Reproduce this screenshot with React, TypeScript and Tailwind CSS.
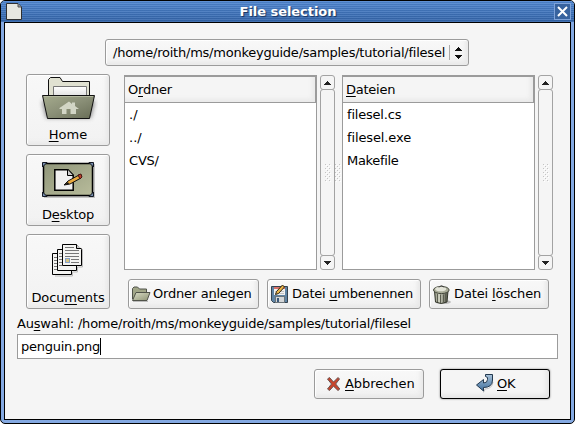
import type { ReactNode } from "react";

function Mnemonic({ text, at, className = "" }: { text: string; at: number; className?: string }) {
  return (
    <span className={`whitespace-pre ${className}`}>
      {text.slice(0, at)}
      <span className="underline decoration-1 underline-offset-2">{text[at]}</span>
      {text.slice(at + 1)}
    </span>
  );
}

function HomeIcon() {
  return (
    <svg className="shrink-0" width="60" height="48" viewBox="0 0 60 48">
      <defs>
        <linearGradient id="homeFront" x1="0" y1="0" x2="1" y2="1">
          <stop offset="0" stopColor="#a6ac8e" />
          <stop offset=".5" stopColor="#8a8f77" />
          <stop offset="1" stopColor="#676c55" />
        </linearGradient>
        <linearGradient id="paper" x1="0" y1="0" x2="0" y2="1">
          <stop offset="0" stopColor="#fff" />
          <stop offset="1" stopColor="#dedede" />
        </linearGradient>
        <filter id="soft" x="-20%" y="-20%" width="140%" height="150%">
          <feGaussianBlur stdDeviation="2" />
        </filter>
      </defs>
      <path d="M4 26H57L53 43H8Z" fill="#666" opacity=".75" filter="url(#soft)" />
      <path d="M10.500 22V4.500L12.500 2.500H22L24.500 6.500H51.500V22Z" fill="#e0e1d1" stroke="#111" />
      <path d="M15.500 22V11.500H48.500V22Z" fill="url(#paper)" stroke="#777" />
      <path d="M4.500 20.500H56.500L51.500 43.500H9.500Z" fill="url(#homeFront)" stroke="#111" />
      <path d="M6 21.500H55" stroke="#b4b99f" />
      <path d="M21.500 33L31 26.500L34 29V27.500H37V31L41 34H38V39H32.500V34H28.500V39H24V34H21.500Z" fill="#d2d5c5" />
    </svg>
  );
}

function DesktopIcon() {
  return (
    <svg className="shrink-0" width="60" height="48" viewBox="0 0 60 48">
      <defs>
        <linearGradient id="mat" x1="0" y1="0" x2="1" y2="1">
          <stop offset="0" stopColor="#90967a" />
          <stop offset="1" stopColor="#b8bc9b" />
        </linearGradient>
      </defs>
      <rect x="6" y="9" width="51" height="34" fill="#c4c4c4" />
      <rect x="5.500" y="8.500" width="49" height="32" fill="url(#mat)" stroke="#000" strokeWidth="1.500" />
      <path d="M4.500 7.500H9L4.500 12ZM55.500 7.500V12L51 7.500ZM4.500 41.500V37L9 41.500ZM55.500 41.500H51L55.500 37Z" fill="#758bad" stroke="#151a24" />
      <path d="M16.800 14.800H30L35.200 20V35.200H16.800Z" fill="#f0f0f0" stroke="#000" strokeWidth="1.500" />
      <path d="M29.500 14.500V20.500H35" fill="#ccc" stroke="#000" />
      <path d="M26 30L30 26L41 20L43 23L32 29Z" fill="#e9a93e" stroke="#111" />
      <path d="M40 20L43 19L44 22L42 24Z" fill="#b83e2d" stroke="#441711" />
      <path d="M26 30L30 27L31 29Z" fill="#111" />
    </svg>
  );
}

function DocumentsIcon() {
  return (
    <svg className="shrink-0" width="60" height="48" viewBox="0 0 60 48">
      <path d="M17 37H34.500V33H39.500V28H44.500V10" stroke="#bbb" fill="none" />
      <g fill="#f4f4f2" stroke="#000">
        <path d="M14.500 14.500H33.500V35.500H14.500Z" />
        <path d="M19.500 10.500H38.500V31.500H19.500Z" />
        <path d="M24.500 5.500H38.500L43.500 10.500V26.500H24.500Z" />
        <path d="M38.500 5.500V9.500H43.500" fill="#ccc" />
      </g>
      <path d="M16 18.500H19M16 21.500H19M16 24.500H19M16 27.500H19M16 30.500H19M21 14.500H24M21 17.500H24M21 20.500H24M21 23.500H24M21 26.500H24M27 8.500H36M27 11.500H41M27 14.500H41M27 17.500H41M33 20.500H41M33 23.500H41" stroke="#777" />
      <rect x="27.500" y="19.500" width="4" height="4" fill="#d8c47e" stroke="#86a0c6" />
    </svg>
  );
}

function FolderIcon() {
  return (
    <svg className="shrink-0" width="20" height="18" viewBox="0 0 20 18">
      <defs>
        <linearGradient id="flap" x1="0" y1="0" x2="1" y2="1">
          <stop offset="0" stopColor="#dcdfc8" />
          <stop offset="1" stopColor="#8d9274" />
        </linearGradient>
      </defs>
      <path d="M2 16.500H17" stroke="#bbb" />
      <path d="M1.500 14V3.500L3 2H6.500L8.500 4H15.500V7" fill="#a1a688" stroke="#50534a" />
      <path d="M1.500 15.500L5 7.500H19L16 15.500Z" fill="url(#flap)" stroke="#50534a" />
    </svg>
  );
}

function RenameIcon() {
  return (
    <svg className="shrink-0" width="20" height="20" viewBox="0 0 20 20">
      <path d="M1.500 2.500H17.500V18.500H3.500L1.500 16.500Z" fill="#5f83a3" stroke="#34424f" />
      <rect x="4" y="3" width="11" height="8" fill="#f1f1f1" />
      <path d="M4 4H15" stroke="#d87068" strokeWidth="2" />
      <path d="M5 7.500H14M5 9.500H14" stroke="#c4c4c4" />
      <rect x="5.500" y="12.500" width="9" height="6" fill="#d4d7d9" stroke="#6b747a" />
      <rect x="7" y="14" width="2" height="4" fill="#3a5878" />
      <path d="M5.500 10.500L6.500 7.500L12.500 1L14.500 3L8.500 9.500Z" fill="#e9b54a" stroke="#2c2413" />
    </svg>
  );
}

function TrashIcon() {
  return (
    <svg className="shrink-0" width="20" height="21" viewBox="0 0 20 21">
      <defs>
        <linearGradient id="can" x1="0" y1="0" x2="1" y2="0">
          <stop offset="0" stopColor="#8b8f7c" />
          <stop offset=".35" stopColor="#d2d4c4" />
          <stop offset="1" stopColor="#4e5144" />
        </linearGradient>
      </defs>
      <ellipse cx="11" cy="18" rx="8" ry="2" fill="#bbb" />
      <path d="M2.500 7L3.500 18Q9 21 15 18L16 7Z" fill="url(#can)" stroke="#34372c" />
      <path d="M5.500 10V18M8.500 10.500V19M11.500 10.500V19M13.500 10V18" stroke="#5b5e50" />
      <ellipse cx="9.300" cy="6" rx="7.800" ry="3.600" fill="#a9ac98" stroke="#45483c" />
      <ellipse cx="8.700" cy="5" rx="5.500" ry="2.300" fill="#e3e4d8" />
      <path d="M7 3.500Q9.500 0 12 3.500" fill="none" stroke="#444" />
    </svg>
  );
}

function CancelIcon() {
  return (
    <svg className="shrink-0" width="16" height="16" viewBox="0 0 16 16">
      <path d="M1.500 3L3.500 1.500L7.500 6L12 1.500L13.500 3L9.700 8L13.800 13L12 14.500L7.500 10.200L3.500 14.500L1.500 13L5.500 8Z" fill="#c8452c" stroke="#6b5552" />
    </svg>
  );
}

function OkIcon() {
  return (
    <svg className="shrink-0" width="20" height="20" viewBox="0 0 20 20">
      <defs>
        <linearGradient id="arrow" x1="0" y1="0" x2="0" y2="1">
          <stop offset="0" stopColor="#a9c3da" />
          <stop offset="1" stopColor="#3f6f9d" />
        </linearGradient>
      </defs>
      <path d="M8.500 18.500L10 15Q17 15 18 8" fill="none" stroke="#c4c4c4" />
      <path d="M10.500 .5H17.500V6Q17.500 13.500 8.500 13.500V17L1.500 11L8.500 5.500V9Q12.500 9 12.500 5.500V3.500L10.500 2.500Z" fill="url(#arrow)" stroke="#23394f" />
    </svg>
  );
}

const bevel =
  "rounded-[3px] border border-[#9b9b9b] bg-linear-to-b from-[#f8f8f8] to-[#f2f2f2] shadow-[inset_1px_1px_1px_#fff,inset_-3px_-3px_4px_#e9e9e9]";

type ButtonProps = { children: ReactNode; label: string; at: number; className: string; text?: string };

function PlaceButton({ children, label, at, className, text }: ButtonProps) {
  return (
    <button className={`flex w-[84px] flex-col items-center ${bevel} ${className}`}>
      {children}
      <Mnemonic text={label} at={at} className={text} />
    </button>
  );
}

function ActionButton({ children, label, at, className, text }: ButtonProps) {
  return (
    <button className={`flex h-[30px] items-center ${bevel} ${className}`}>
      {children}
      <Mnemonic text={label} at={at} className={text} />
    </button>
  );
}

function Scrollbar() {
  const box = "flex w-[15px] items-center justify-center rounded-[3px] border border-[#a3a3a3] bg-[#f5f5f5]";
  return (
    <div className="flex h-[195px] w-[15px] flex-col">
      <div className={`h-[15px] ${box}`}>
        <svg width="7" height="4"><path d="M3 0H4V1H5V2H6V3H7V4H0V3H1V2H2V1H3Z" fill="#222" /></svg>
      </div>
      <div className={`-my-px flex-1 ${box}`}>
        <Grip />
      </div>
      <div className={`h-[15px] ${box}`}>
        <svg width="7" height="4"><path d="M3 4H4V3H5V2H6V1H7V0H0V1H1V2H2V3H3Z" fill="#222" /></svg>
      </div>
    </div>
  );
}

function Grip() {
  return (
    <svg width="6" height="18">
      <defs>
        <pattern id="grip" width="4" height="4" patternUnits="userSpaceOnUse">
          <path d="M0 0H1V1H0ZM2 2H3V3H2Z" fill="#c4c4c4" />
          <path d="M1 1H2V2H1ZM3 3H4V4H3Z" fill="#fff" />
        </pattern>
      </defs>
      <rect width="6" height="18" fill="url(#grip)" />
    </svg>
  );
}

type Row = { name: string; tracking: string };

function FileList({ title, at, tracking, rows }: { title: string; at: number; tracking: string; rows: Row[] }) {
  return (
    <div className="h-[195px] w-[193px] border border-[#9b9b9b] bg-white">
      <div className="flex h-[27px] items-center border-t border-r border-b border-[#9b9b9b] bg-[#f5f5f5] pl-[3px] shadow-[inset_-3px_-3px_4px_#e9e9e9]">
        <Mnemonic text={title} at={at} className={tracking} />
      </div>
      {rows.map((row) => (
        <div key={row.name} className={`flex h-[23px] items-center pl-1 ${row.tracking}`}>{row.name}</div>
      ))}
    </div>
  );
}

const folders: Row[] = [
  { name: "./", tracking: "tracking-normal" },
  { name: "../", tracking: "tracking-normal" },
  { name: "CVS/", tracking: "tracking-[-0.2px]" },
];

const files: Row[] = [
  { name: "filesel.cs", tracking: "tracking-[-0.2px]" },
  { name: "filesel.exe", tracking: "tracking-[-0.12px]" },
  { name: "Makefile", tracking: "tracking-[-0.33px]" },
];

export default function App() {
  return (
    <div className="flex h-[424px] w-[575px] flex-col overflow-hidden rounded-[5px] border border-black bg-[#84a9e2] font-['DejaVu_Sans',sans-serif] text-[13px] leading-4 text-black">
      <header className="flex h-[21px] shrink-0 items-center bg-[repeating-linear-gradient(to_bottom,#ffffff18_0px,#ffffff18_1px,#00000010_1px,#00000010_2px),linear-gradient(#5087d2,#3264a9)] pr-[3px] pl-[5px] text-white">
        <svg width="16" height="17">
          <path d="M.5.5H12L15.500 4V16.500H.5Z" fill="#e6e6e0" stroke="#303030" />
          <path d="M12 1V4H15" fill="#999" stroke="#555" />
        </svg>
        <h1 className="flex-1 text-center text-[13px] font-bold tracking-[-0.05px] text-shadow-[1px_1px_1px_#16335f]">File selection</h1>
        <button className="flex size-[17px] items-center justify-center border border-[#7fa3d9] bg-[#37639f]">
          <svg width="13" height="13"><path d="M2 2L11 11M11 2L2 11" stroke="#fff" strokeWidth="2" /></svg>
        </button>
      </header>
      <main className="mx-[3px] mb-[3px] flex flex-1 flex-col border border-black bg-[#f5f5f5]">
        <div className={`mt-4 ml-[100px] flex h-[27px] w-[364px] items-center pl-[7px] ${bevel}`}>
          <span className="tracking-[-0.235px]">/home/roith/ms/monkeyguide/samples/tutorial/filesel</span>
          <span className="ml-auto h-[15px] w-px shrink-0 bg-[#aaa]" />
          <svg className="mr-[6px] ml-[5px] shrink-0" width="7" height="12">
            <path d="M3 0H4V1H5V2H6V3H7V4H0V3H1V2H2V1H3ZM3 12H4V11H5V10H6V9H7V8H0V9H1V10H2V11H3Z" fill="#111" />
          </svg>
        </div>
        <div className="mt-2 ml-[21px] flex h-[235px]">
          <nav className="flex w-[84px] flex-col gap-2">
            <PlaceButton label="Home" at={0} className="h-[72px] gap-1"><HomeIcon /></PlaceButton>
            <PlaceButton label="Desktop" at={1} className="h-[72px] gap-1" text="tracking-[-0.2px]"><DesktopIcon /></PlaceButton>
            <PlaceButton label="Documents" at={4} className="h-[75px] gap-[3px] pt-1" text="tracking-[-0.1px]"><DocumentsIcon /></PlaceButton>
          </nav>
          <section className="mt-px ml-[14px]">
            <div className="flex">
              <FileList title="Ordner" at={1} tracking="tracking-[-0.2px]" rows={folders} />
              <div className="ml-[3px]"><Scrollbar /></div>
              <div className="flex w-[7px] items-center"><Grip /></div>
              <FileList title="Dateien" at={0} tracking="tracking-[-0.25px]" rows={files} />
              <div className="ml-[3px]"><Scrollbar /></div>
            </div>
            <div className="mt-[9px] ml-1 flex gap-2">
              <ActionButton label="Ordner anlegen" at={8} className="w-[131px] gap-[2px] pl-[2px]" text="tracking-[-0.23px]"><FolderIcon /></ActionButton>
              <ActionButton label="Datei umbenennen" at={6} className="w-[154px] gap-[2px] pl-[2px]" text="tracking-[-0.25px]"><RenameIcon /></ActionButton>
              <ActionButton label="Datei löschen" at={6} className="w-[120px] gap-[2px] pl-[2px]" text="tracking-[-0.12px]"><TrashIcon /></ActionButton>
            </div>
          </section>
        </div>
        <div className="mt-[7px] ml-3 h-[18px]"><Mnemonic text="Auswahl: /home/roith/ms/monkeyguide/samples/tutorial/filesel" at={2} className="tracking-[-0.215px]" /></div>
        <div className="ml-3 flex h-[25px] w-[541px] items-center border border-[#9b9b9b] bg-white pl-[3px]">
          <span className="tracking-[-0.25px]">penguin.png</span>
          <span className="h-[17px] w-px bg-black" />
        </div>
        <footer className="mt-[10px] flex gap-4 pl-[309px]">
          <ActionButton label="Abbrechen" at={0} className="w-[110px] gap-[3px] pl-[11px]" text="tracking-[-0.05px]"><CancelIcon /></ActionButton>
          <button className="flex h-[30px] w-[110px] items-center gap-[2px] rounded-[3px] border border-black bg-[#f5f5f5] pl-[34px] shadow-[0_0_2px_#777,inset_-3px_-3px_4px_#e5e5e5]">
            <OkIcon />
            <Mnemonic text="OK" at={0} className="tracking-[-0.3px]" />
          </button>
        </footer>
      </main>
    </div>
  );
}
